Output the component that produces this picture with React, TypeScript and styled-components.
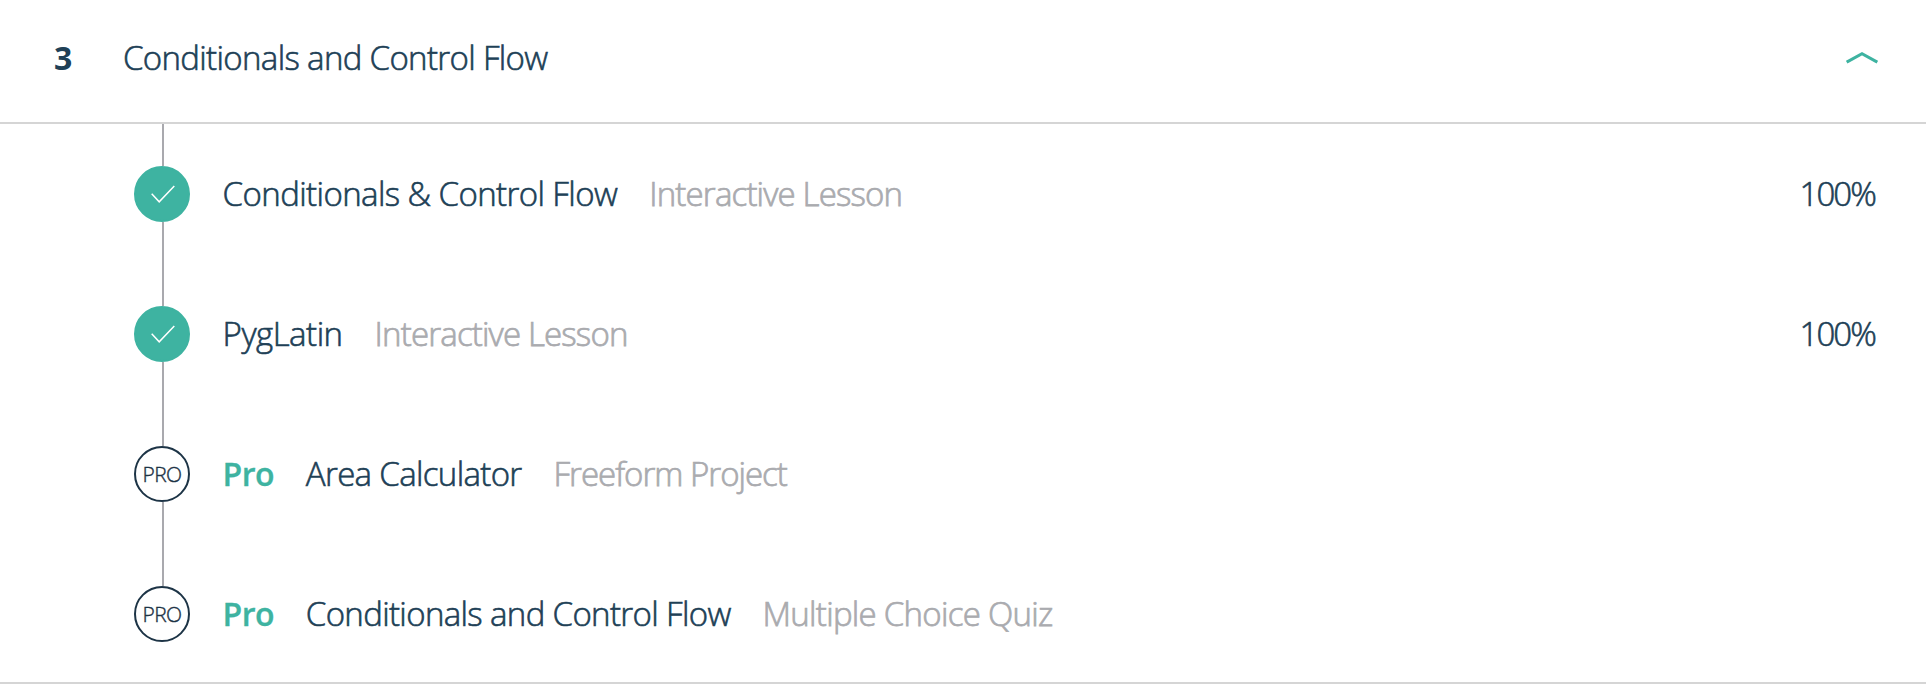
import React from 'react';
import styled, { createGlobalStyle } from 'styled-components';

const color = {
  navy: '#204056',
  ring: '#1d3446',
  teal: '#3eb3a1',
  gray: '#aaabaf',
  line: '#a9a9ae',
  border: '#d5d5d5',
};

const GlobalStyle = createGlobalStyle`
  * { box-sizing: border-box; }
  body { margin: 0; background: #fff; }
`;

const Page = styled.main`
  width: 1926px;
  height: 684px;
  font-family: "Open Sans", "Noto Sans", sans-serif;
  font-size: 33px;
  font-weight: 300;
  line-height: 56px;
  color: ${color.navy};
  border-bottom: 2px solid ${color.border};
`;

const Header = styled.header`
  display: flex;
  align-items: center;
  height: 124px;
  padding: 0 48px 6px 54px;
  border-bottom: 2px solid ${color.border};
`;

const Index = styled.span`
  width: 69px;
  font-size: 32px;
  font-weight: 700;
`;

const Label = styled.span<{ $tracking: number; $muted?: boolean }>`
  color: ${(p) => (p.$muted ? color.gray : color.navy)};
  letter-spacing: ${(p) => p.$tracking}px;
  white-space: nowrap;
  -webkit-text-stroke: ${(p) => (p.$muted ? 0.75 : 0.6)}px currentColor;
`;

const Chevron = styled.svg`
  display: block;
  width: 32px;
  height: 14px;
  margin-left: auto;
  fill: none;
  stroke: ${color.teal};
  stroke-width: 3;
`;

const Lessons = styled.ul`
  list-style: none;
  margin: 0;
  padding: 0 51px 0 134px;
`;

const Lesson = styled.li`
  display: flex;
  height: 140px;

  &:last-child {
    height: 98px;
  }
`;

const Track = styled.div`
  display: flex;
  flex-direction: column;
  align-items: center;
  width: 56px;
  margin-right: 32.6px;
`;

const Segment = styled.div<{ $height: number }>`
  width: 2px;
  height: ${(p) => p.$height}px;
  margin-left: 2px;
  background: ${color.line};
`;

const Badge = styled.div<{ $done?: boolean }>`
  display: flex;
  align-items: center;
  justify-content: center;
  flex: none;
  width: 56px;
  height: 56px;
  border-radius: 50%;
  border: 2px solid ${(p) => (p.$done ? color.teal : color.ring)};
  background: ${(p) => (p.$done ? color.teal : '#fff')};
  color: ${color.ring};
  font-size: 21px;
  letter-spacing: -0.6px;
  -webkit-text-stroke: 0.4px currentColor;
`;

const Check = styled.svg`
  width: 24px;
  height: 18px;
  margin-left: 2px;
  fill: none;
  stroke: #fff;
  stroke-width: 1.5;
`;

const Details = styled.div`
  display: flex;
  flex: 1;
  gap: 32px;
  height: 56px;
  margin-top: 42px;
`;

const Pro = styled.span`
  color: ${color.teal};
  font-size: 32px;
  font-weight: 600;
  letter-spacing: -0.6px;
  -webkit-text-stroke: 0.3px currentColor;
`;

const Percent = styled(Label)`
  margin-left: auto;
`;

type Item = {
  title: string;
  tracking: number;
  kind: string;
  kindTracking: number;
  percent?: string;
};

const items: Item[] = [
  { title: 'Conditionals & Control Flow', tracking: -0.59, kind: 'Interactive Lesson', kindTracking: -0.83, percent: '100%' },
  { title: 'PygLatin', tracking: -0.5, kind: 'Interactive Lesson', kindTracking: -0.83, percent: '100%' },
  { title: 'Area Calculator', tracking: -0.66, kind: 'Freeform Project', kindTracking: -1 },
  { title: 'Conditionals and Control Flow', tracking: -0.65, kind: 'Multiple Choice Quiz', kindTracking: -0.72 },
];

export default function App() {
  return (
    <Page>
      <GlobalStyle />
      <Header>
        <Index>3</Index>
        <Label $tracking={-0.66}>Conditionals and Control Flow</Label>
        <Chevron viewBox="0 0 32 14">
          <path d="M0.7 11.2 16 2.6 31.3 11.2" />
        </Chevron>
      </Header>
      <Lessons>
        {items.map((item, i) => (
          <Lesson key={item.title}>
            <Track>
              <Segment $height={42} />
              <Badge $done={!!item.percent}>
                {item.percent ? (
                  <Check viewBox="0 0 24 18">
                    <path d="M0.7 8.8 8.2 16.8 23.3 1" />
                  </Check>
                ) : (
                  'PRO'
                )}
              </Badge>
              {i < items.length - 1 && <Segment $height={42} />}
            </Track>
            <Details>
              {!item.percent && <Pro>Pro</Pro>}
              <Label $tracking={item.tracking}>{item.title}</Label>
              <Label $tracking={item.kindTracking} $muted>{item.kind}</Label>
              {item.percent && <Percent $tracking={-1.9}>{item.percent}</Percent>}
            </Details>
          </Lesson>
        ))}
      </Lessons>
    </Page>
  );
}
